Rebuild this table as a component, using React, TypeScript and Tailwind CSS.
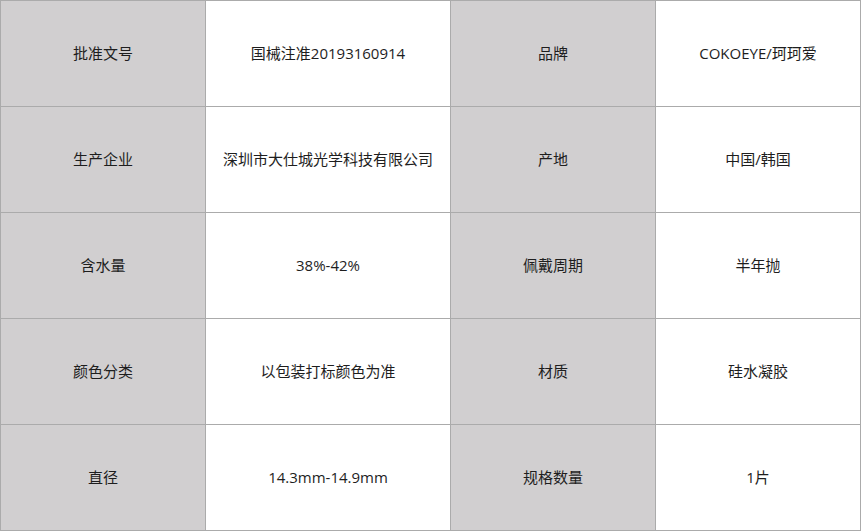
import React from "react";

const rows: [string, string, string, string][] = [
  ["批准文号", "国械注准20193160914", "品牌", "COKOEYE/珂珂爱"],
  ["生产企业", "深圳市大仕城光学科技有限公司", "产地", "中国/韩国"],
  ["含水量", "38%-42%", "佩戴周期", "半年抛"],
  ["颜色分类", "以包装打标颜色为准", "材质", "硅水凝胶"],
  ["直径", "14.3mm-14.9mm", "规格数量", "1片"],
];

const App: React.FC = () => {
  return (
    <div className="min-h-screen bg-white text-[15px] text-[#1e1e1e] [font-family:'Open_Sans','Noto_Sans_CJK_SC',sans-serif]">
      <div className="grid w-[861px] grid-cols-[205px_245px_205px_205px] border-l border-t border-[#ababab]">
        {rows.map((r) =>
          r.map((cell, i) => (
            <div
              key={r[0] + i}
              className={`flex h-[106px] items-center justify-center border-b border-r border-[#ababab] ${
                i % 2 === 0 ? "bg-[#d1cfd0]" : "bg-white"
              }`}
            >
              {cell}
            </div>
          ))
        )}
      </div>
    </div>
  );
};

export default App;
